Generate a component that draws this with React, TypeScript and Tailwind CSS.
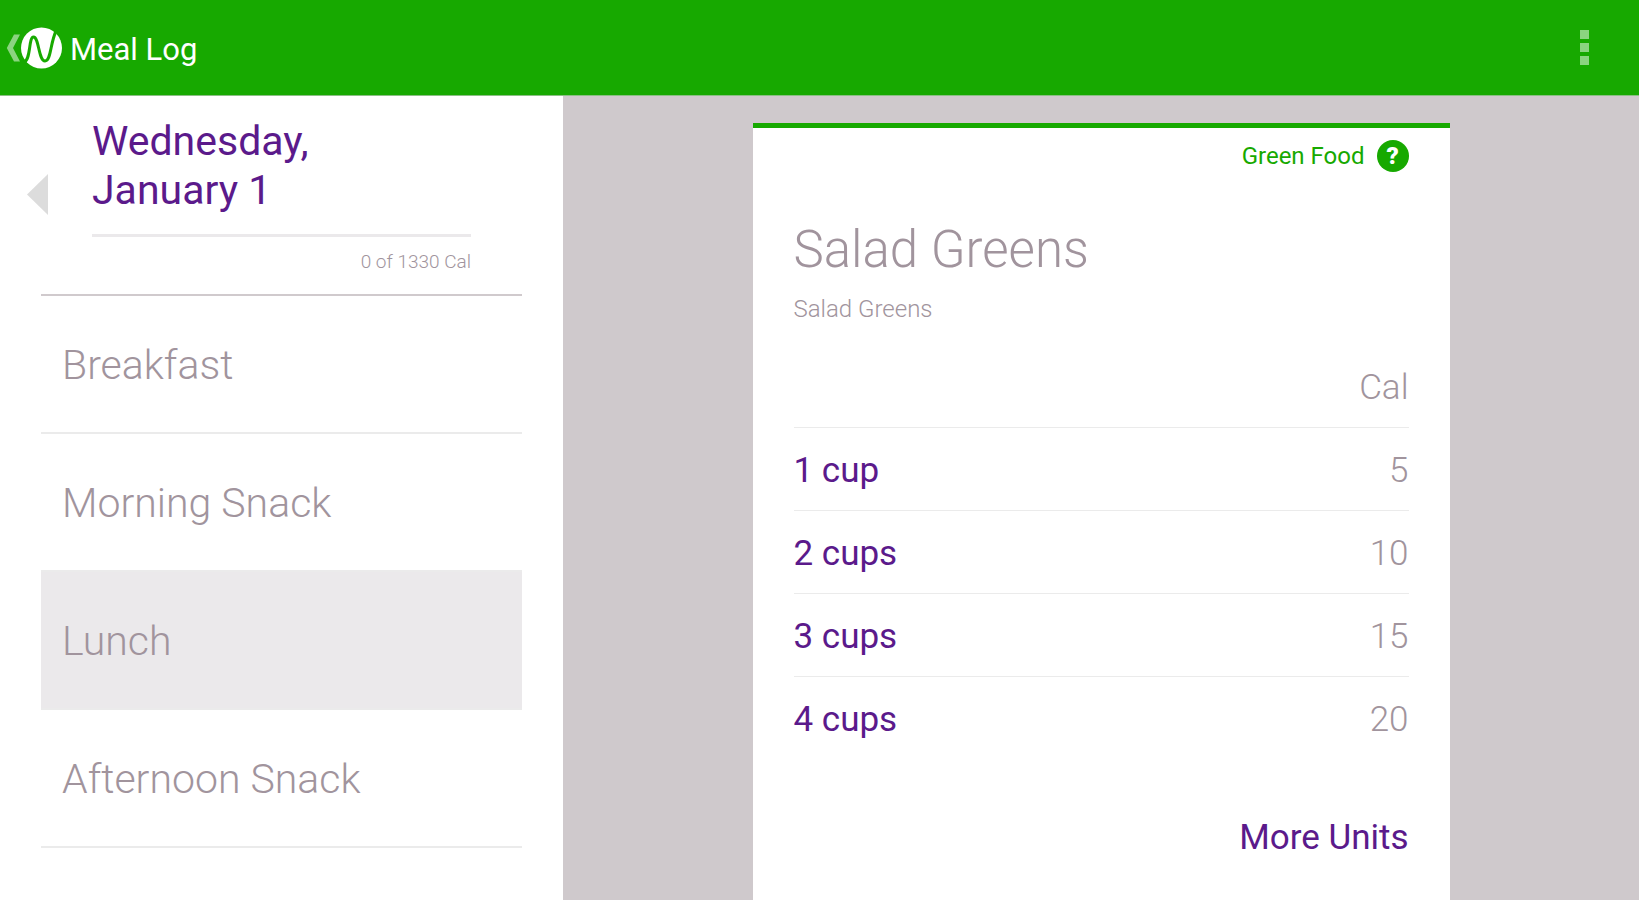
import { useState } from "react";

const MEALS = ["Breakfast", "Morning Snack", "Lunch", "Afternoon Snack"];

const SERVINGS = [
  { unit: "1 cup", calories: 5 },
  { unit: "2 cups", calories: 10 },
  { unit: "3 cups", calories: 15 },
  { unit: "4 cups", calories: 20 },
];

function Logo() {
  return (
    <svg width="56" height="42" viewBox="0 0 56 42" aria-hidden="true">
      <path d="M8 7.5h6L7 21l7 13.500H8L.8 21z" fill="#fff" fillOpacity="0.5" />
      <circle cx="35.5" cy="21" r="20.5" fill="#fff" />
      <path
        d="M18 35C25 33 22.500 10 27.500 10C33 10 32.500 34 39 34C45 34 44 17 50 4"
        fill="none"
        stroke="#17a900"
        strokeWidth="3"
      />
    </svg>
  );
}

function Header() {
  return (
    <header className="flex h-24 items-center justify-between border-b border-[#8bbf84] bg-[#17a900] pr-[50px] pl-[6px]">
      <a href="#" className="flex items-center gap-2 text-white">
        <Logo />
        <h1 className="pt-1 text-[31px] leading-9">Meal Log</h1>
      </a>
      <button type="button" aria-label="More options" className="flex flex-col gap-1">
        <span className="size-[9px] bg-white/50" />
        <span className="size-[9px] bg-white/50" />
        <span className="size-[9px] bg-white/50" />
      </button>
    </header>
  );
}

function MealList() {
  const [selected, setSelected] = useState("Lunch");

  return (
    <aside className="w-[563px] shrink-0 bg-white px-[41px]">
      <div className="flex h-[200px] border-b-2 border-[#d0cacd] pt-[21px]">
        <button type="button" aria-label="Previous day" className="-ml-[14px] h-fit w-[65px] pt-[57px]">
          <svg width="21" height="42" viewBox="0 0 21 42">
            <path d="M21 0v41L0 20.5z" fill="#dcdcdc" />
          </svg>
        </button>
        <div className="mr-[51px] flex-1">
          <h2 className="text-[41px] leading-[49px] text-[#5b1a8b]">
            Wednesday,
            <br />
            January 1
          </h2>
          <div className="mt-[19px] h-[3px] bg-[#ebe9eb]" />
          <p className="mt-[13px] text-right text-[19px] leading-6 font-light text-[#a1949d]">0 of 1330 Cal</p>
        </div>
      </div>
      <ul>
        {MEALS.map((meal) => (
          <li key={meal} className="border-b-2 border-[#ebebeb]">
            <button
              type="button"
              onClick={() => setSelected(meal)}
              className={`h-[136px] w-full px-[21px] pt-1 text-left text-[41px] font-light text-[#a1949d] ${
                meal === selected ? "bg-[#ebe9eb]" : ""
              }`}
            >
              {meal}
            </button>
          </li>
        ))}
      </ul>
    </aside>
  );
}

function FoodCard() {
  return (
    <section className="w-[697px] border-t-[5px] border-[#17a900] bg-white px-[41px] pt-3">
      <div className="flex items-center justify-end gap-3 text-[#17a900]">
        <span className="text-2xl">Green Food</span>
        <button
          type="button"
          aria-label="About green foods"
          className="flex size-8 items-center justify-center rounded-full bg-[#17a900] text-2xl font-black text-white"
        >
          ?
        </button>
      </div>
      <h2 className="mt-12 text-[51px] leading-[60px] font-light text-[#a1949d]">Salad Greens</h2>
      <p className="mt-[13px] text-2xl font-light text-[#a1949d]">Salad Greens</p>
      <table className="mt-[19px] w-full text-[35px] leading-[42px]">
        <thead>
          <tr className="h-[83px] border-b border-[#ebebeb]">
            <td />
            <th scope="col" className="pt-[5px] text-right font-light text-[#a1949d]">
              Cal
            </th>
          </tr>
        </thead>
        <tbody>
          {SERVINGS.map((serving) => (
            <tr key={serving.unit} className="h-[83px] border-b border-[#ebebeb] last:border-b-0">
              <th scope="row" className="pt-[5px] text-left font-normal text-[#5b1a8b]">
                {serving.unit}
              </th>
              <td className="pt-[5px] text-right font-light text-[#a1949d]">{serving.calories}</td>
            </tr>
          ))}
        </tbody>
      </table>
      <div className="mt-[58px] pb-6 text-right">
        <button type="button" className="text-[35px] leading-[42px] text-[#5b1a8b]">
          More Units
        </button>
      </div>
    </section>
  );
}

export default function App() {
  return (
    <div className="flex min-h-screen flex-col bg-[#cfc9cc] font-[Roboto,sans-serif]">
      <Header />
      <div className="flex flex-1">
        <MealList />
        <main className="flex flex-1 justify-center pt-[27px]">
          <FoodCard />
        </main>
      </div>
    </div>
  );
}
